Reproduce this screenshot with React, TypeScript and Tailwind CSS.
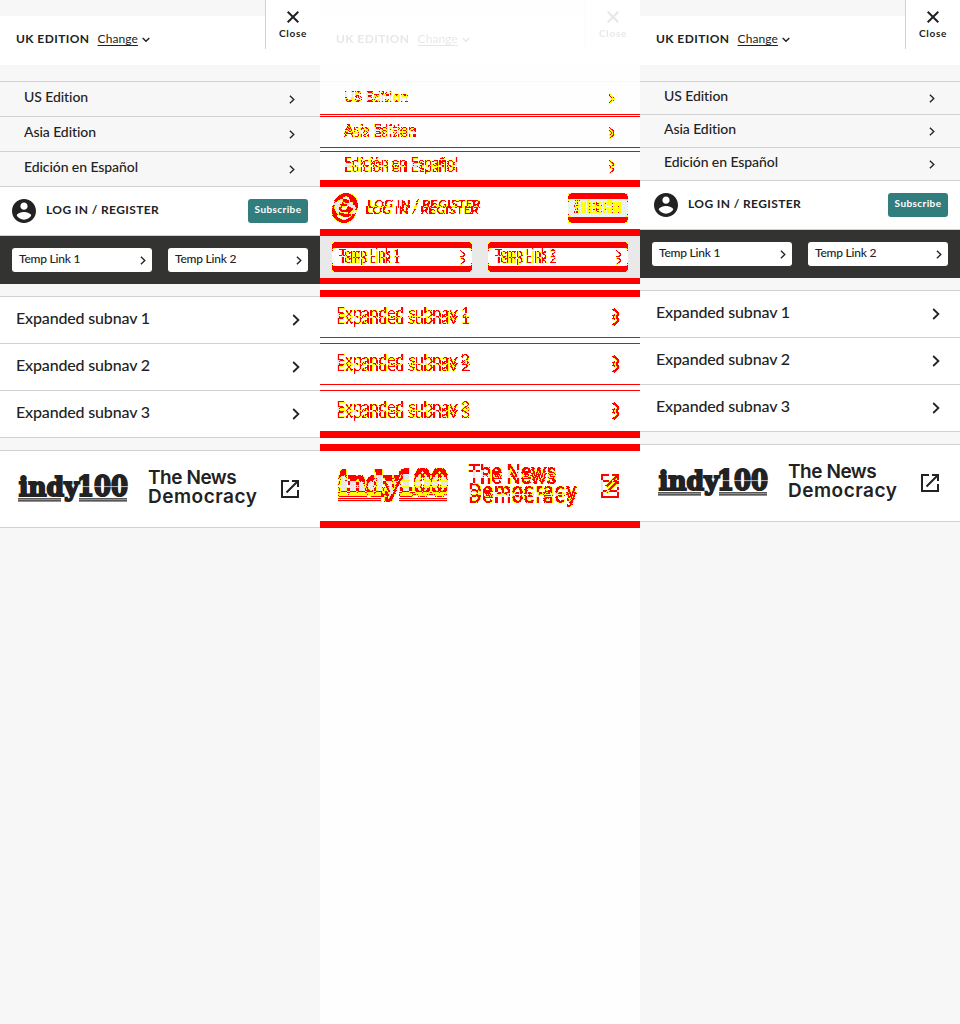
import React from "react";

type Version = "before" | "after";

function Chevron({ className = "" }: { className?: string }) {
  return (
    <svg viewBox="0 0 8 12" className={className} fill="none" stroke="#222" strokeWidth="1.8">
      <path d="M1.2 1 L6.4 6 L1.2 11" />
    </svg>
  );
}

function Header() {
  return (
    <header className="relative h-[65px] pt-4">
      <div className="flex h-[49px] items-start bg-white pl-4 pt-[15px] leading-4">
        <span className="text-[12px] font-bold tracking-[0.42px]">UK EDITION</span>
        <span className="ml-[8px] text-[12px] tracking-[0.1px] underline underline-offset-2">Change</span>
        <svg viewBox="0 0 8 6" className="ml-[4px] mt-[6px] h-[6px] w-[8px]" fill="none" stroke="#222" strokeWidth="1.4">
          <path d="M0.7 1 L4 4.3 L7.3 1" />
        </svg>
      </div>
      <div className="absolute right-0 top-0 flex h-[49px] w-[55px] flex-col items-center border-l border-[#d1d1d1] bg-white pt-[11px]">
        <svg viewBox="0 0 12 12" className="h-3 w-3" stroke="#222" strokeWidth="2">
          <path d="M0.7 0.7 L11.3 11.3 M11.3 0.7 L0.7 11.3" />
        </svg>
        <span className="mt-[2px] text-[10px] font-bold leading-4 tracking-[0.7px]">Close</span>
      </div>
    </header>
  );
}

function Logos() {
  return (
    <section className="flex h-[78px] items-start border-y border-[#d1d1d1] bg-white pl-[17px]">
      <svg viewBox="0 0 112 32" className="mt-[21px] h-[32px] w-[112px] overflow-visible" fill="#222">
        <g fontFamily="'DejaVu Serif', serif" fontWeight="bold" stroke="#222" strokeWidth="2">
          <text x="1.8" y="23.8" fontSize="26.5" textLength="60" lengthAdjust="spacingAndGlyphs">indy</text>
          <text x="60" y="23.8" fontSize="27.5" textLength="51" lengthAdjust="spacingAndGlyphs">100</text>
        </g>
        <path d="M64 14.6H111" stroke="#fff" strokeWidth="0.7" />
        <path d="M1 26.8H44M62 26.8H110M1 28.9H44M62 28.9H110" stroke="#222" strokeWidth="1.2" />
      </svg>
      <p className="ml-[19px] mt-[17px] w-[112px] whitespace-nowrap font-['Inter'] text-[19px] font-semibold leading-[19px]">
        <span className="block tracking-[-0.45px]">The News</span>
        <span className="block tracking-[0.5px]">Democracy</span>
      </p>
      <svg viewBox="0 0 18 18" className="ml-[21px] mt-[29px] h-[18px] w-[18px]" fill="none" stroke="#222" strokeWidth="2">
        <path d="M8 1H1V17H17V10M11 1H17V7M5.5 12.5L16.5 1.5" />
      </svg>
    </section>
  );
}

function MenuPanel({ version }: { version: Version }) {
  const before = version === "before";
  return (
    <div className="h-[1024px] w-[320px] overflow-hidden bg-[#f7f7f7] font-['Lato',sans-serif] text-[#222]">
      <Header />
      <nav className="mt-4 border-t border-[#d1d1d1] text-[14px] font-medium">
        {["US Edition", "Asia Edition", "Edición en Español"].map((label) => (
          <a
            key={label}
            className={
              before
                ? "flex h-[35px] items-start justify-between border-b border-[#d1d1d1] pl-6 pr-[25px] pt-[5px] leading-5 tracking-[-0.08px]"
                : "flex h-[33px] items-start justify-between border-b border-[#d1d1d1] pl-6 pr-[25px] pt-[4px] leading-5 tracking-[-0.08px]"
            }
          >
            {label}
            <Chevron className="mt-[8px] h-[9px] w-[6px]" />
          </a>
        ))}
      </nav>
      <section className={before ? "flex h-[49px] items-start border-b border-[#d1d1d1] bg-white pl-3 pr-3 pt-3" : "flex h-[49px] items-start border-b border-[#d1d1d1] bg-white pl-[14px] pr-3 pt-3"}>
        <svg viewBox="2 2 20 20" className="h-6 w-6" fill="#222">
          <path d="M12 2C6.48 2 2 6.48 2 12s4.48 10 10 10 10-4.48 10-10S17.52 2 12 2zm0 3c1.66 0 3 1.34 3 3s-1.34 3-3 3-3-1.34-3-3 1.34-3 3-3zm0 14.200c-2.500 0-4.710-1.280-6-3.220.03-1.990 4-3.080 6-3.080 1.990 0 5.970 1.090 6 3.080-1.290 1.940-3.500 3.220-6 3.220z" />
        </svg>
        <span className="ml-[10px] mt-[3px] text-[12px] font-bold leading-4 tracking-[0.39px]">LOG IN / REGISTER</span>
        <span className="ml-auto h-6 w-[60px] rounded-[3px] bg-[#327d7e] text-center text-[10px] font-bold leading-[21px] tracking-[0.4px] text-white">
          Subscribe
        </span>
      </section>
      <section className="grid h-[48px] grid-cols-2 gap-4 bg-[#333331] p-3">
        {["Temp Link 1", "Temp Link 2"].map((label) => (
          <a key={label} className="flex h-6 items-start justify-between rounded-[3px] bg-white pl-[7px] pr-[6px] text-[12px] font-medium leading-[22px] tracking-[-0.22px]">
            {label}
            <Chevron className="mt-[8px] h-[9px] w-[6px]" />
          </a>
        ))}
      </section>
      <nav className="my-3 border-t border-[#d1d1d1] bg-white text-[16px] font-medium">
        {["Expanded subnav 1", "Expanded subnav 2", "Expanded subnav 3"].map((label) => (
          <a key={label} className="flex h-[47px] items-start justify-between border-b border-[#d1d1d1] pl-4 pr-5 pt-[9px] leading-6 tracking-[-0.16px]">
            {label}
            <Chevron className="mt-[8px] h-[12px] w-[8px]" />
          </a>
        ))}
      </nav>
      <Logos />
    </div>
  );
}

function DifferencePanel() {
  return (
    <div className="relative h-[1024px] w-[320px] overflow-hidden bg-white">
      <svg className="absolute h-0 w-0" aria-hidden="true">
        <filter id="difference-map" x="0" y="0" width="100%" height="100%" colorInterpolationFilters="sRGB">
          <feColorMatrix values="0.3 0.59 0.11 0 0  0.3 0.59 0.11 0 0  0 0 0 0 0  0.3 0.59 0.11 0 0" result="lum" />
          <feComponentTransfer result="mask">
            <feFuncR type="discrete" tableValues="1" />
            <feFuncG type="discrete" tableValues="0" />
            <feFuncB type="discrete" tableValues="0" />
            <feFuncA type="discrete" tableValues="0 1 1 1 1 1 1 1 1 1 1 1 1 1 1 1 1 1 1 1 1 1 1 1 1 1 1 1 1 1 1 1 1 1 1 1 1 1 1 1" />
          </feComponentTransfer>
          <feComponentTransfer in="lum" result="edge">
            <feFuncR type="discrete" tableValues="1" />
            <feFuncG type="discrete" tableValues="1" />
            <feFuncB type="discrete" tableValues="0" />
            <feFuncA type="discrete" tableValues="0 0 1 1 1 0 0 0 1 1 1 1 1 1 1 1 1 1 1 1 1 1 1 0 0 0 0 0 0 0 0 0 0 0 0 0 0 0 0 0" />
          </feComponentTransfer>
          <feMerge>
            <feMergeNode in="mask" />
            <feMergeNode in="edge" />
          </feMerge>
        </filter>
      </svg>
      <div className="opacity-10">
        <MenuPanel version="before" />
      </div>
      <div className="absolute inset-0 isolate [filter:url(#difference-map)]" aria-hidden="true">
        <div className="absolute inset-0">
          <MenuPanel version="before" />
        </div>
        <div className="absolute inset-0 mix-blend-difference">
          <MenuPanel version="after" />
        </div>
      </div>
    </div>
  );
}

export default function App() {
  return (
    <main className="grid h-[1024px] w-[960px] grid-cols-3 overflow-hidden">
      <MenuPanel version="before" />
      <DifferencePanel />
      <MenuPanel version="after" />
    </main>
  );
}
